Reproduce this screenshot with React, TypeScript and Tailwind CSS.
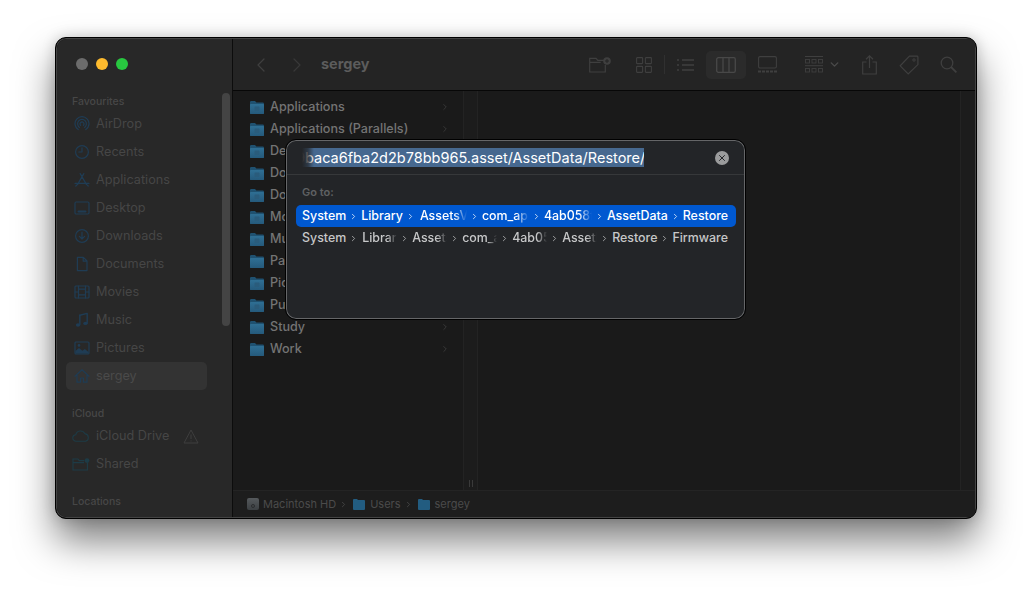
import React from 'react';
import { ChevronDown, ChevronLeft, ChevronRight, X } from 'lucide-react';

const favourites = ['AirDrop', 'Recents', 'Applications', 'Desktop', 'Downloads', 'Documents', 'Movies', 'Music', 'Pictures'];
const folders = ['Applications', 'Applications (Parallels)', 'Desktop', 'Documents', 'Downloads', 'Movies', 'Music', 'Parallels', 'Pictures', 'Public', 'Study', 'Work'];

const fade = '[mask-image:linear-gradient(to_right,black_72%,transparent)]';

function SideIcon({ name }: { name: string }) {
  const p = { fill: 'none', stroke: 'currentColor', strokeWidth: 1.2, strokeLinecap: 'round' as const, strokeLinejoin: 'round' as const };
  return (
    <svg viewBox="0 0 16 16" className="w-4 h-4 shrink-0 text-[#1f3c54]">
      {name === 'AirDrop' && (
        <g {...p}>
          <path d="M4.2 13.6a7 7 0 1 1 7.6 0" />
          <path d="M5.4 11.4a4.4 4.4 0 1 1 5.2 0" />
          <path d="M6.6 9.4a2 2 0 1 1 2.8 0" />
        </g>
      )}
      {name === 'Recents' && (
        <g {...p}>
          <circle cx="8" cy="8" r="6.4" />
          <path d="M8 3.8V8H4.8" />
        </g>
      )}
      {name === 'Applications' && (
        <g {...p}>
          <path d="M9.8 1.6L3.6 12.4M6.2 1.6l6.2 10.8M1 11.4h14M1.8 14l1.4-1.4M14.2 14l-1.4-1.4" />
        </g>
      )}
      {name === 'Desktop' && (
        <g {...p}>
          <rect x="1" y="2" width="14" height="12" rx="1.2" />
          <path d="M4.5 11.5h7" strokeWidth={2} />
        </g>
      )}
      {name === 'Downloads' && (
        <g {...p}>
          <circle cx="8" cy="8" r="6.4" />
          <path d="M8 4.2v6.6M5.4 8.4L8 11l2.6-2.6" />
        </g>
      )}
      {name === 'Documents' && (
        <g {...p}>
          <path d="M3.4 1.4h6L13 5v9.6H3.4zM9.2 1.4v3.8H13" />
        </g>
      )}
      {name === 'Movies' && (
        <g {...p}>
          <rect x="1" y="2" width="14" height="12" rx="1" />
          <path d="M4.5 2v12M11.5 2v12M1 8h3.5M11.5 8H15M4.5 5.2h7M4.5 10.8h7" />
        </g>
      )}
      {name === 'Music' && (
        <g>
          <path d="M5.8 3.2L13.2 1.4v9.8" {...p} strokeWidth={1.4} />
          <path d="M5.8 3.2v9.6" {...p} strokeWidth={1.4} />
          <ellipse cx="4" cy="13" rx="2.2" ry="1.7" fill="currentColor" />
          <ellipse cx="11.4" cy="11.4" rx="2.2" ry="1.7" fill="currentColor" />
        </g>
      )}
      {name === 'Pictures' && (
        <g>
          <rect x="1" y="2" width="14" height="12" rx="1" {...p} />
          <path d="M1.4 13.4V11l3.6-3 3.4 2.8 2.4-1.8 3.8 3v1.4z" fill="currentColor" />
          <circle cx="5" cy="5.4" r="1.3" fill="currentColor" />
        </g>
      )}
      {name === 'sergey' && (
        <g {...p}>
          <path d="M1 8.2L8 1.8l7 6.4M3 7v7.2h3.6V10h2.8v4.2H13V7" />
        </g>
      )}
    </svg>
  );
}

function Folder({ plain }: { plain: boolean }) {
  return (
    <svg viewBox="0 0 14 13" className="w-[14px] h-[13px] shrink-0">
      <defs>
        <linearGradient id="fold" x1="0" y1="0" x2="0" y2="1">
          <stop offset="0" stopColor="#2f6f94" />
          <stop offset="1" stopColor="#255a7c" />
        </linearGradient>
      </defs>
      <path d="M0 1.2Q0 0 1.2 0H5l1.4 1.6h6.4Q14 1.6 14 2.8V12q0 1-1 1H1q-1 0-1-1z" fill="#1f5170" />
      <rect x="0" y="3" width="14" height="10" rx="0.8" fill="url(#fold)" />
      {!plain && <rect x="4.5" y="5.5" width="5" height="4.5" rx="1" fill="#2a5c7c" />}
    </svg>
  );
}

function Crumb({ text, w, last }: { text: string; w?: string; last?: boolean }) {
  return (
    <>
      <span className={w ? `block overflow-hidden whitespace-nowrap ${w} ${fade}` : 'whitespace-nowrap'}>{text}</span>
      {!last && <ChevronRight size={9} strokeWidth={2.4} className="shrink-0 mx-[3px] opacity-80" />}
    </>
  );
}

export default function App() {
  return (
    <div
      className="w-[1032px] h-[592px] overflow-hidden bg-white pl-[55px] pt-[37px]"
      style={{ fontFamily: 'Inter, "Liberation Sans", sans-serif' }}
    >
      <div className="relative w-[922px] h-[482px] flex rounded-[11px] border border-black bg-[#1a1a1a] shadow-[0_22px_38px_rgba(0,0,0,0.5),0_0_14px_rgba(0,0,0,0.18),inset_0_0_0_1px_rgba(255,255,255,0.18)] overflow-hidden p-px">
        {/* sidebar */}
        <aside className="relative w-[176px] shrink-0 bg-[#282828] border-r border-black/70 pl-[9px] pt-[19px] rounded-l-[10px] overflow-hidden">
          <div className="flex gap-2 pl-[10px] h-[20px]">
            <span className="w-3 h-3 rounded-full bg-[#6c6c6c]" />
            <span className="w-3 h-3 rounded-full bg-[#febb2e]" />
            <span className="w-3 h-3 rounded-full bg-[#28c840]" />
          </div>
          <div className="mt-[15px] pl-[6px] h-[17px] text-[10.5px] font-medium leading-[18px] text-[#474747]">Favourites</div>
          <div className="w-[141px]">
            {favourites.map(f => (
              <div key={f} className="h-[28px] flex items-center gap-[6px] pl-[8px] text-[12.7px] text-[#464646]">
                <SideIcon name={f} />
                <span>{f}</span>
              </div>
            ))}
            <div className="h-[28px] flex items-center gap-[6px] pl-[8px] text-[12.7px] text-[#4a4a4a] rounded-[5px] bg-[#333333]">
              <SideIcon name="sergey" />
              <span>sergey</span>
            </div>
          </div>
          <div className="mt-[15px] pl-[6px] h-[17px] text-[10.5px] font-medium leading-[18px] text-[#474747]">iCloud</div>
          <div className="h-[28px] flex items-center gap-[6px] pl-[6px] text-[12.7px] text-[#464646]">
            <svg viewBox="0 0 18 12" className="w-[18px] h-[12px] text-[#1d3b46]">
              <path d="M4.2 11.2a3.2 3.2 0 0 1-.4-6.4 4.8 4.8 0 0 1 9-1.2 3.9 3.9 0 0 1 .8 7.6z" fill="none" stroke="currentColor" strokeWidth="1.1" />
            </svg>
            <span>iCloud Drive</span>
            <svg viewBox="0 0 16 15" className="w-[16px] h-[15px] ml-[8px] text-[#3e3e3e]">
              <path d="M8 1L15 14H1zM8 5.4v4.6M8 11.4v1" fill="none" stroke="currentColor" strokeWidth="1" />
            </svg>
          </div>
          <div className="h-[28px] flex items-center gap-[6px] pl-[6px] text-[12.7px] text-[#464646]">
            <svg viewBox="0 0 18 13" className="w-[18px] h-[13px] text-[#1d3b46]">
              <path d="M1 3.5V12h14.4V4.6M1 3.5V1h5l1.2 1.6h5M1 4.6h11" fill="none" stroke="currentColor" strokeWidth="1.1" />
              <circle cx="15" cy="2.6" r="2.4" fill="currentColor" />
            </svg>
            <span>Shared</span>
          </div>
          <div className="mt-[15px] pl-[6px] h-[18px] text-[10.5px] font-medium leading-[18px] text-[#474747]">Locations</div>
          <div className="absolute left-[165px] top-[54px] w-[8px] h-[233px] rounded-full bg-[#444444]" />
        </aside>

        {/* main area */}
        <div className="flex-1 min-w-0 flex flex-col">
          <header className="h-[52px] shrink-0 flex items-center bg-[#242424] border-b border-black/80 text-[#3f3f3f]">
            <ChevronLeft size={24} strokeWidth={1.3} className="ml-[16px]" />
            <ChevronRight size={24} strokeWidth={1.3} className="ml-[12px] text-[#383838]" />
            <span className="ml-[12px] w-[60px] -mt-[2px] text-[14.5px] font-bold text-[#5c5c5c]">sergey</span>
            <svg viewBox="0 0 23 16" className="ml-[208px] w-[23px] h-[16px] shrink-0">
              <path d="M.7 5V1.4h6.4l1.6 2h8M.7 5v10h15.6V8M.7 5.4h11" fill="none" stroke="currentColor" strokeWidth="1.2" />
              <circle cx="18" cy="4" r="3.8" fill="currentColor" />
              <path d="M18 2v4M16 4h4" stroke="#242424" strokeWidth="1" />
            </svg>
            <svg viewBox="0 0 16 16" className="ml-[24px] w-[16px] h-[16px] shrink-0">
              <g fill="none" stroke="currentColor" strokeWidth="1.1">
                <rect x=".6" y=".6" width="6" height="6" rx=".6" />
                <rect x="9.4" y=".6" width="6" height="6" rx=".6" />
                <rect x=".6" y="9.4" width="6" height="6" rx=".6" />
                <rect x="9.4" y="9.4" width="6" height="6" rx=".6" />
              </g>
            </svg>
            <span className="ml-[12px] w-px h-[19px] bg-[#303030]" />
            <svg viewBox="0 0 17 14" className="ml-[12px] w-[17px] h-[14px] shrink-0">
              <path d="M5 2h12M5 7h12M5 12h12M0 2h2M0 7h2M0 12h2" stroke="currentColor" strokeWidth="1.3" />
            </svg>
            <div className="ml-[12px] w-[40px] h-[28px] rounded-[5px] bg-[#2b2b2b] flex items-center justify-center shrink-0">
              <svg viewBox="0 0 20 16" className="w-[20px] h-[16px]">
                <g fill="none" stroke="#484848" strokeWidth="1.3">
                  <rect x=".7" y=".7" width="18.6" height="14.6" rx="1.6" />
                  <path d="M7 1v14M13 1v14" />
                </g>
              </svg>
            </div>
            <svg viewBox="0 0 19 17" className="ml-[12px] w-[19px] h-[17px] shrink-0">
              <rect x=".6" y=".6" width="17.8" height="11.4" rx="1.4" fill="none" stroke="currentColor" strokeWidth="1.1" />
              <path d="M0 15.5h19" stroke="currentColor" strokeWidth="2" strokeDasharray="3 1" />
            </svg>
            <svg viewBox="0 0 18 17" className="ml-[28px] w-[18px] h-[17px] shrink-0">
              <path d="M0 .5h18" stroke="currentColor" />
              <g fill="none" stroke="currentColor" strokeWidth=".9">
                <rect x=".5" y="3.5" width="4" height="3.5" /><rect x="7" y="3.5" width="4" height="3.5" /><rect x="13.5" y="3.5" width="4" height="3.5" />
                <rect x=".5" y="12.5" width="4" height="3.5" /><rect x="7" y="12.5" width="4" height="3.5" /><rect x="13.5" y="12.5" width="4" height="3.5" />
              </g>
              <path d="M0 9.7h18" stroke="currentColor" />
            </svg>
            <ChevronDown size={13} strokeWidth={2.6} className="ml-[5px] shrink-0 text-[#4a4a4a]" />
            <svg viewBox="0 0 15 20" className="ml-[21px] w-[15px] h-[20px] shrink-0">
              <path d="M4.5 7H.7v12h13.6V7h-3.8M7.5 13V1M4 4.2L7.5.8 11 4.2" fill="none" stroke="currentColor" strokeWidth="1.2" />
            </svg>
            <svg viewBox="0 0 20 20" className="ml-[22px] w-[20px] h-[20px] shrink-0">
              <path d="M10.5 1.2h7.6a.8.8 0 0 1 .8.8v7.6L9.2 19 1.2 10.8z" fill="none" stroke="currentColor" strokeWidth="1.2" />
              <circle cx="15" cy="5" r="1.2" fill="none" stroke="currentColor" />
            </svg>
            <svg viewBox="0 0 17 17" className="ml-[21px] w-[17px] h-[17px] shrink-0">
              <circle cx="7" cy="7" r="5.8" fill="none" stroke="currentColor" strokeWidth="1.3" />
              <path d="M11 11l5.4 5.4" stroke="currentColor" strokeWidth="1.8" />
            </svg>
          </header>

          <div className="flex-1 min-h-0 flex">
            {/* first column */}
            <div className="w-[230px] shrink-0 pt-[5px]">
              {folders.map(f => (
                <div key={f} className="h-[22px] flex items-center pl-[17px] pr-[13px] text-[12.6px] font-medium text-[#747474]">
                  <Folder plain={f === 'Parallels' || f === 'Study' || f === 'Work'} />
                  <span className="ml-[6px] flex-1 whitespace-nowrap">{f}</span>
                  <ChevronRight size={10} strokeWidth={2} className="text-[#3d3d3d]" />
                </div>
              ))}
            </div>
            <div className="relative w-[15px] shrink-0 border-x border-[#232323] bg-[#1c1c1c]">
              <div className="absolute bottom-[3px] left-[5px] w-[4px] h-[7px] border-x border-[#3a3a3a]" />
            </div>
            <div className="flex-1" />
            <div className="relative w-[15px] shrink-0 border-l border-[#232323] bg-[#1c1c1c]" />
          </div>

          <footer className="h-[27px] shrink-0 flex items-center pl-[14px] border-t border-[#242424] bg-[#1d1d1d] text-[11px] text-[#4b4b4b]">
            <span className="flex items-end justify-center w-[12px] h-[12px] rounded-[2px] bg-gradient-to-b from-[#55595c] to-[#3c4043]">
              <span className="w-[4px] h-[4px] mb-[2px] rounded-full border border-[#2a2d2f]" />
            </span>
            <span className="ml-[4px]">Macintosh HD</span>
            <ChevronRight size={9} strokeWidth={2} className="mx-[3px]" />
            <svg viewBox="0 0 12 11" className="ml-[2px] w-[12px] h-[11px]">
              <path d="M0 1q0-1 1-1h3l1 1h6q1 0 1 1v8q0 1-1 1H1q-1 0-1-1z" fill="#225c80" />
            </svg>
            <span className="ml-[5px]">Users</span>
            <ChevronRight size={9} strokeWidth={2} className="mx-[3px]" />
            <svg viewBox="0 0 12 11" className="ml-[2px] w-[12px] h-[11px]">
              <path d="M0 1q0-1 1-1h3l1 1h6q1 0 1 1v8q0 1-1 1H1q-1 0-1-1z" fill="#225c80" />
            </svg>
            <span className="ml-[5px]">sergey</span>
          </footer>
        </div>

        {/* Go to Folder dialog */}
        <div className="absolute left-[229px] top-[101px] w-[461px] h-[181px] rounded-[11px] border border-black bg-[#232528] shadow-[inset_0_0_0_1px_rgba(255,255,255,0.3)] p-px">
          <div className="relative h-[34px] flex items-center border-b border-[#36383a] pl-[15px]">
            <div className="relative w-[342px] h-[19px] overflow-hidden bg-[#46688f] text-[14.5px] leading-[19px] text-white whitespace-nowrap">
              <span className="block ml-[-6px]">9baca6fba2d2b78bb965.asset/AssetData/Restore/</span>
              <div className="absolute left-0 top-0 w-[12px] h-[19px] bg-gradient-to-r from-[#232528] via-[#232528]/70 to-transparent" />
            </div>
            <div className="absolute right-[15px] top-[10px] w-[14px] h-[14px] rounded-full bg-[#9a9b9c] flex items-center justify-center">
              <X size={10} strokeWidth={2.4} className="text-[#232528]" />
            </div>
          </div>
          <div className="mt-[9px] pl-[15px] h-[16px] text-[11px] font-semibold leading-[16px] text-[#5f6163]">Go to:</div>
          <div className="mt-[5px] ml-[9px] mr-[8px] h-[22px] rounded-[5px] bg-[#0058d0] flex items-center pl-[6px] text-[12.4px] font-medium text-white">
            <Crumb text="System" />
            <Crumb text="Library" />
            <Crumb text="AssetsV2" w="ml-[2px] w-[47px]" />
            <Crumb text="com_apple_MobileAsset" w="w-[47px]" />
            <Crumb text="4ab058ff" w="w-[48px]" />
            <Crumb text="AssetData" />
            <Crumb text="Restore" last />
          </div>
          <div className="ml-[9px] mr-[8px] h-[22px] flex items-center pl-[6px] text-[12.4px] font-medium text-[#c7c8c9]">
            <Crumb text="System" />
            <Crumb text="Library" w="ml-[1px] w-[35px]" />
            <Crumb text="AssetsV2" w="w-[35px]" />
            <Crumb text="com_apple" w="w-[35px]" />
            <Crumb text="4ab058ff" w="w-[35px]" />
            <Crumb text="AssetData" w="w-[35px]" />
            <Crumb text="Restore" />
            <Crumb text="Firmware" last />
          </div>
        </div>
      </div>
    </div>
  );
}
